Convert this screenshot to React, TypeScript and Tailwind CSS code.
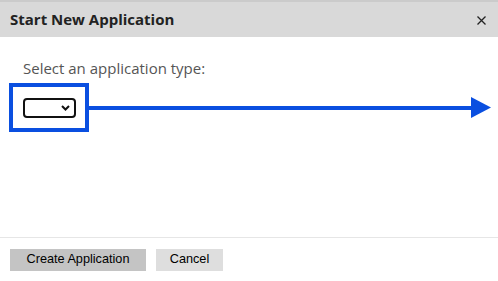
export default function App() {
  return (
    <div className="w-[498px] h-[281px] bg-white flex flex-col overflow-hidden">
      {/* Header */}
      <div className="h-[37px] bg-[#d9d9d9] border-t-2 border-[#cbcbcb] flex items-center justify-between pl-[10px] pr-[12px]">
        <span className="font-['Open_Sans',sans-serif] font-bold text-[15px] text-[#222]">
          Start New Application
        </span>
        <svg width="9" height="9" viewBox="0 0 9 9" className="mt-[1px]">
          <path d="M0.5 0.5L8.5 8.5M8.5 0.5L0.5 8.5" stroke="#222" strokeWidth="1.3" />
        </svg>
      </div>

      {/* Body */}
      <div className="flex-1 flex flex-col pt-[21px]">
        <label className="pl-[23px] font-['Open_Sans',sans-serif] text-[15px] text-[#555] leading-[21px]">
          Select an application type:
        </label>
        <div className="flex items-center mt-[4px] pl-[9px] pr-[7px]">
          <div className="w-[80px] h-[49px] border-[4px] border-[#0a4fe0] flex items-center pl-[10px]">
            <div className="w-[53px] h-[20px] border-2 border-[#111] rounded-[4px] flex items-center justify-end pr-[4px]">
              <svg width="9" height="6" viewBox="0 0 9 6">
                <path d="M1 1l3.5 3.5L8 1" fill="none" stroke="#111" strokeWidth="2" />
              </svg>
            </div>
          </div>
          <div className="flex-1 h-[4px] bg-[#0a4fe0]" />
          <svg width="20" height="21" viewBox="0 0 20 21" className="-ml-[1px]">
            <path d="M0 0L20 10.5L0 21Z" fill="#0a4fe0" />
          </svg>
        </div>
      </div>

      {/* Footer */}
      <div className="h-[44px] border-t border-[#e6e6e6] flex items-start gap-[10px] pl-[10px] pt-[11px]">
        <button className="h-[22px] w-[136px] bg-[#c4c4c4] font-['Liberation_Sans',Arial,sans-serif] text-[12.7px] text-black">
          Create Application
        </button>
        <button className="h-[22px] w-[67px] bg-[#dedede] font-['Liberation_Sans',Arial,sans-serif] text-[12.7px] text-black">
          Cancel
        </button>
      </div>
    </div>
  )
}
